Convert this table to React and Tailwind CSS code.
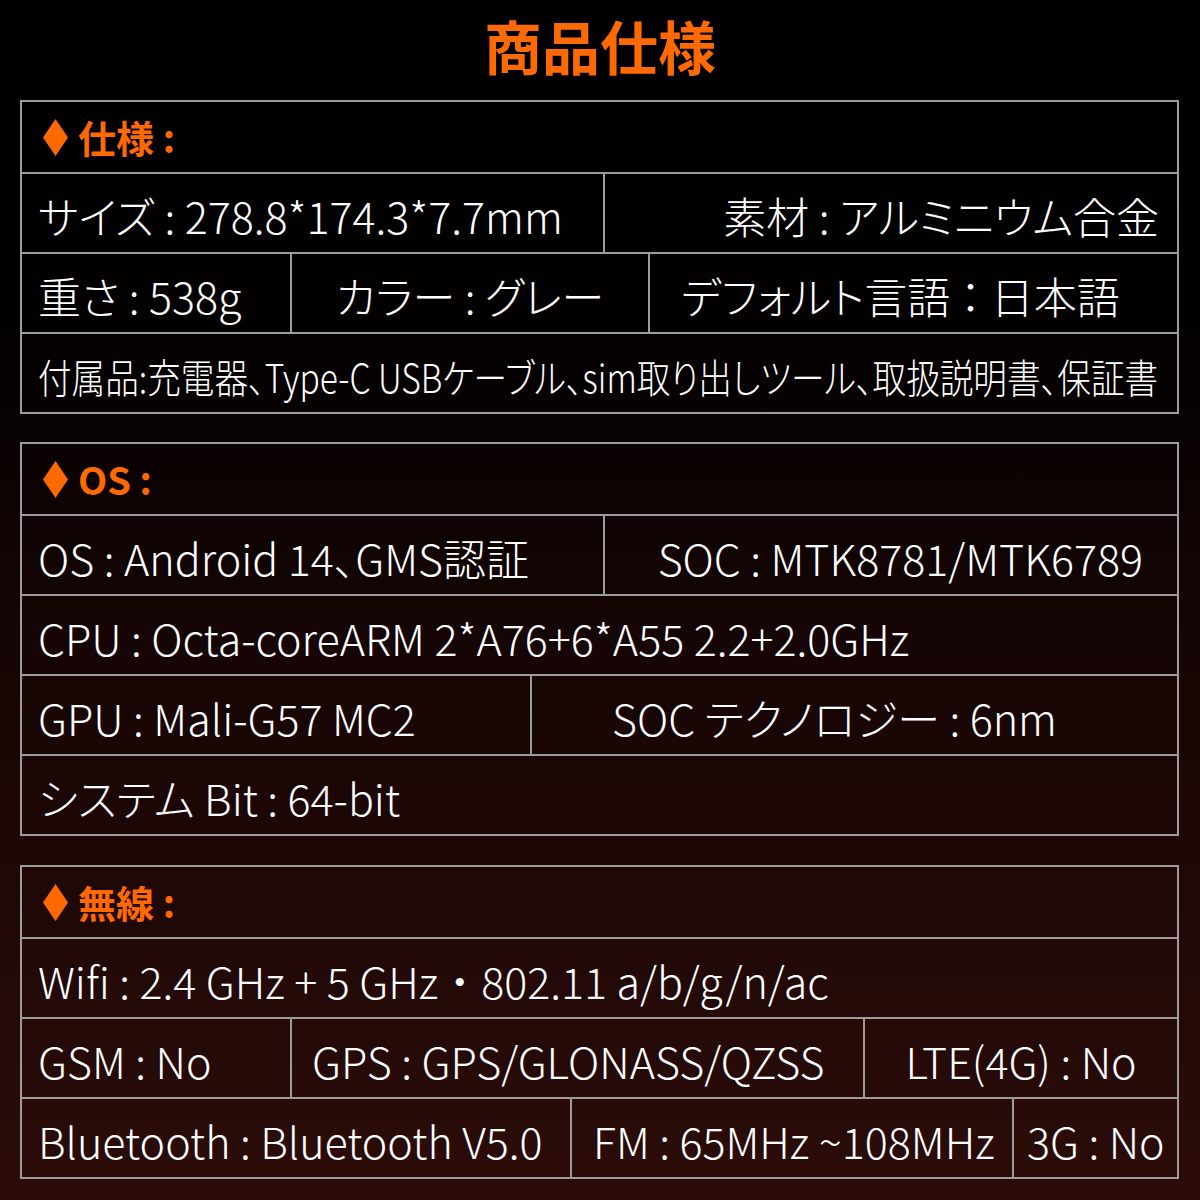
import React from "react";

const Diamond = () => (
  <svg width="25" height="37" viewBox="0 0 25 37" className="mr-[10px] shrink-0">
    <polygon points="12.5,0 25,18.5 12.5,37 0,18.5" fill="#ff6a00" />
  </svg>
);

const Header = ({ label }) => (
  <div className="h-[70px] flex items-center pl-[21px] text-[#ff6a00] font-bold text-[38px]">
    <Diamond />
    <span>{label}</span>
  </div>
);

const Row = ({ children }) => (
  <div className="h-[80px] border-t-2 border-[#9c9c9c] flex">{children}</div>
);

const Cell = ({ children, className = "" }) => (
  <div className={`h-full flex items-center whitespace-nowrap pt-[5px] ${className}`}>
    {children}
  </div>
);

const Table = ({ label, children }) => (
  <div className="border-2 border-[#9c9c9c]">
    <Header label={label} />
    {children}
  </div>
);

export default function App() {
  return (
    <div className="w-[1200px] h-[1200px] bg-linear-to-b from-black via-[#140504] to-[#2c0c09] text-white font-['Noto_Sans_CJK_JP','Noto_Sans',sans-serif] overflow-hidden">
      <h1 className="h-[100px] flex items-center justify-center text-[58px] font-bold text-[#ff6a00] pb-[10px]">
        商品仕様
      </h1>

      <div className="ml-[20px] mr-[21px] flex flex-col text-[43px] font-light leading-none [font-feature-settings:'palt']">
        <Table label="仕様 :">
          <Row>
            <Cell className="w-[583px] pl-[16px] border-r-2 border-[#9c9c9c]">
              サイズ : 278.8*174.3*7.7mm
            </Cell>
            <Cell className="flex-1 justify-end pr-[18px]">素材 : アルミニウム合金</Cell>
          </Row>
          <Row>
            <Cell className="w-[270px] pl-[16px] border-r-2 border-[#9c9c9c]">重さ : 538g</Cell>
            <Cell className="w-[358px] justify-center border-r-2 border-[#9c9c9c]">
              カラー : グレー
            </Cell>
            <Cell className="flex-1 justify-center pr-[26px]">デフォルト言語 ： 日本語</Cell>
          </Row>
          <Row>
            <Cell className="flex-1 pl-[16px] overflow-hidden">
              <span className="inline-block origin-left scale-x-[0.84] text-[40px]">
                付属品:充電器、Type-C USBケーブル、sim取り出しツール、取扱説明書、保証書
              </span>
            </Cell>
          </Row>
        </Table>

        <div className="h-[28px]" />

        <Table label="OS :">
          <Row>
            <Cell className="w-[583px] pl-[16px] border-r-2 border-[#9c9c9c]">
              OS : Android 14、GMS認証
            </Cell>
            <Cell className="flex-1 justify-end pr-[34px]">SOC : MTK8781/MTK6789</Cell>
          </Row>
          <Row>
            <Cell className="flex-1 pl-[16px]">CPU : Octa-coreARM 2*A76+6*A55 2.2+2.0GHz</Cell>
          </Row>
          <Row>
            <Cell className="w-[510px] pl-[16px] border-r-2 border-[#9c9c9c]">GPU : Mali-G57 MC2</Cell>
            <Cell className="flex-1 pl-[80px]">SOC テクノロジー : 6nm</Cell>
          </Row>
          <Row>
            <Cell className="flex-1 pl-[16px]">システム Bit : 64-bit</Cell>
          </Row>
        </Table>

        <div className="h-[29px]" />

        <Table label="無線 :">
          <Row>
            <Cell className="flex-1 pl-[16px]">
              Wifi : 2.4 GHz + 5 GHz
              <span className="[font-feature-settings:normal]">・</span>
              802.11 a/b/g/n/ac
            </Cell>
          </Row>
          <Row>
            <Cell className="w-[270px] pl-[16px] border-r-2 border-[#9c9c9c]">GSM : No</Cell>
            <Cell className="w-[573px] pl-[20px] border-r-2 border-[#9c9c9c]">
              GPS : GPS/GLONASS/QZSS
            </Cell>
            <Cell className="flex-1 justify-center">LTE(4G) : No</Cell>
          </Row>
          <Row>
            <Cell className="w-[550px] pl-[16px] border-r-2 border-[#9c9c9c]">
              Bluetooth : Bluetooth V5.0
            </Cell>
            <Cell className="w-[442px] pl-[21px] border-r-2 border-[#9c9c9c]">
              FM : 65MHz ~108MHz
            </Cell>
            <Cell className="flex-1 pl-[13px]">3G : No</Cell>
          </Row>
        </Table>
      </div>
    </div>
  );
}
